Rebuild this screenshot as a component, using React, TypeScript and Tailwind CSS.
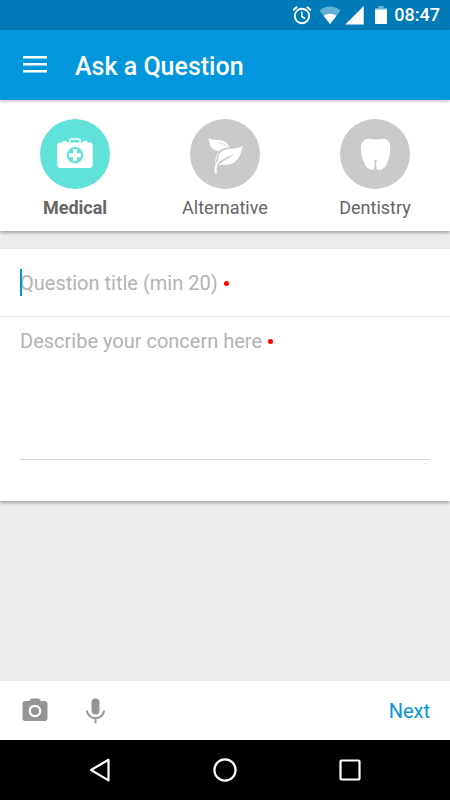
import { useState } from "react";
import type { ReactNode } from "react";

function StatusBar() {
  return (
    <div className="flex h-[30px] items-center justify-end bg-[#007bb8] pr-[10px] text-white">
      <svg className="mr-[6px] h-[22px] w-[22px]" viewBox="0 0 22 22" fill="none" stroke="currentColor" aria-hidden="true">
        <circle cx="11" cy="12" r="7.2" strokeWidth="1.9" />
        <path d="M10.8 7.5v5l3.3 2" strokeWidth="1.5" />
        <path d="M2.2 6.2l4-3.4M19.8 6.2l-4-3.4" strokeWidth="1.9" />
      </svg>
      <svg className="mr-[4px] h-[20px] w-[22px]" viewBox="0 0 22 20" fill="currentColor" aria-hidden="true">
        <path d="M.3 5.500Q11-2.500 21.7 5.500L11 19z" opacity=".4" />
        <path d="M4.500 10.800Q11 6.500 17.500 10.800L11 19z" />
      </svg>
      <svg className="mr-[11px] h-[20px] w-[19px]" viewBox="0 0 19 20" fill="currentColor" aria-hidden="true">
        <path d="M18.7 1v18.500H.3z" />
      </svg>
      <svg className="mr-[7px] h-[20px] w-[12px]" viewBox="0 0 12 20" fill="currentColor" aria-hidden="true">
        <path d="M3.3 1h5.4v2H12v3H0V3h3.3z" opacity=".4" />
        <path d="M0 4.6h12V18q0 1-1 1H1q-1 0-1-1z" />
      </svg>
      <span className="text-[18px] leading-[22px] font-medium">08:47</span>
    </div>
  );
}

function MedicalIcon() {
  return (
    <svg className="h-full w-full" viewBox="0 0 70 70" aria-hidden="true">
      <path d="M29.8 23.5v-1.3q0-2.2 2.2-2.2h6q2.2 0 2.2 2.2v1.3" fill="none" stroke="#fff" strokeWidth="1.600" />
      <path
        d="M20.3 23.4h2q.3-1.4 1.5-1.4h2q1.2 0 1.5 1.4h15.4q.3-1.4 1.5-1.4h2q1.2 0 1.5 1.4h2q3 0 3 3V46q0 3-3 3H20.3q-3 0-3-3V26.400q0-3 3-3z"
        fill="#fff"
      />
      <circle cx="35" cy="36.200" r="8.200" fill="#60e2d8" />
      <path d="M33 30.200h4v4h4v4h-4v4h-4v-4h-4v-4h4z" fill="#fff" />
    </svg>
  );
}

function LeafIcon() {
  return (
    <svg className="h-full w-full" viewBox="0 0 70 70" aria-hidden="true">
      <path
        d="M18 19.200C22 21.200 26.500 20.500 31 21.300C35.500 22.300 38 25 39.600 28.300C35.500 28.600 31.500 29.700 29.200 32C24.500 31.500 21.300 29.500 20.300 26.500C19.500 24 19.800 21.700 18 19.200Z"
        fill="#fff"
      />
      <path d="M29 23.400C32.500 24.200 35.200 25.700 37.500 28" fill="none" stroke="#cacaca" strokeWidth=".8" />
      <path
        d="M53.200 26.800C51.500 30 51.500 34 49.300 37.500C46.500 42.500 42.500 45.500 37 45.800C33.500 46 31 45.500 28 46.300C33 41.500 39 40 44.500 34.500C38 38.300 33 39 28.500 44C27.500 38.500 28.800 33.500 33.500 31.300C39.500 28.800 47.500 30.500 53.200 26.800Z"
        fill="#fff"
      />
      <path d="M26 54.300C25 49.500 25.600 46 28.300 42.500" fill="none" stroke="#fff" strokeWidth="2" />
      <path d="M28.200 34C26.500 37 25.600 40.500 25.600 43.500" fill="none" stroke="#fff" strokeWidth="1" />
    </svg>
  );
}

function ToothIcon() {
  return (
    <svg className="h-full w-full" viewBox="0 0 70 70" aria-hidden="true">
      <path
        d="M28 19.800C31.500 19.400 33 20.600 35.500 20.600S40 19.400 43.500 19.800C48.500 20.400 50.500 24.500 50.300 29.500C50.100 35.500 48.800 41.500 46.300 46C44.500 49.300 41.500 51 38.500 51.200C37 51.200 36.400 50.200 36.200 48.800L35.800 43.500H35L34.600 48.800C34.400 50.200 34 51.200 32.500 51.100C29.500 50.800 26.500 48.800 25 45.500C22.500 40.500 20.900 35.500 20.900 29.500C20.900 24.500 23 20.400 28 19.800Z"
        fill="#fff"
      />
      <circle cx="35.400" cy="42.500" r="1.400" fill="#cacaca" />
      <path d="M34.900 43h1l.5 8.500h-2z" fill="#cacaca" />
    </svg>
  );
}

const categories: { name: string; icon: ReactNode }[] = [
  { name: "Medical", icon: <MedicalIcon /> },
  { name: "Alternative", icon: <LeafIcon /> },
  { name: "Dentistry", icon: <ToothIcon /> },
];

function Required() {
  return <span className="mb-[3px] ml-[6px] inline-block h-[5px] w-[5px] rounded-full bg-[#ff0000] align-middle" />;
}

export default function App() {
  const [selected, setSelected] = useState("Medical");
  const [title, setTitle] = useState("");
  const [details, setDetails] = useState("");

  return (
    <div className="flex min-h-screen flex-col bg-[#ececec] font-[Roboto,sans-serif]">
      <StatusBar />
      <header className="relative flex h-[70px] items-center bg-[#0296dd] pl-[23px] text-white shadow-[0_1px_3px_rgba(0,0,0,0.3)]">
        <button type="button" aria-label="Menu" className="mr-[28px] h-6 w-6">
          <svg className="h-6 w-6" viewBox="0 0 24 24" fill="currentColor" aria-hidden="true">
            <path d="M0 3h24v2.500H0zM0 10h24v2.500H0zM0 17h24v2.500H0z" />
          </svg>
        </button>
        <h1 className="pt-[3px] text-[25px] leading-[30px] font-medium">Ask a Question</h1>
      </header>

      <nav aria-label="Category" className="grid h-[131px] grid-cols-3 bg-white shadow-[0_2px_3px_rgba(0,0,0,0.3)]">
        {categories.map(({ name, icon }) => {
          const active = name === selected;
          return (
            <button
              key={name}
              type="button"
              aria-pressed={active}
              onClick={() => setSelected(name)}
              className="flex flex-col items-center pt-[19px]"
            >
              <span className={active ? "h-[70px] w-[70px] rounded-full bg-[#60e2d8]" : "h-[70px] w-[70px] rounded-full bg-[#cacaca]"}>
                {icon}
              </span>
              <span
                className={
                  active
                    ? "mt-2 text-[18px] leading-[22px] font-bold text-[#666666]"
                    : "mt-2 text-[18px] leading-[22px] text-[#666666]"
                }
              >
                {name}
              </span>
            </button>
          );
        })}
      </nav>

      <form className="mt-[18px] bg-white pb-[41px] shadow-[0_2px_3px_rgba(0,0,0,0.3)]">
        <div className="relative h-[68px] border-b border-[#e6e6e6] px-5 pt-5">
          <input
            id="title"
            value={title}
            onChange={(e) => setTitle(e.target.value)}
            className="block h-[28px] w-full text-[20px] leading-[28px] text-[#444444] caret-[#0296dd] outline-none"
          />
          {title === "" && (
            <>
              <label htmlFor="title" className="absolute top-5 left-5 text-[20px] leading-[28px] text-[#b3b3b3]">
                Question title (min 20)
                <Required />
              </label>
              <span className="absolute top-5 left-5 h-[27px] w-[2px] bg-[#0296dd]" />
            </>
          )}
        </div>
        <div className="relative px-5 pt-[10px]">
          <textarea
            id="details"
            value={details}
            onChange={(e) => setDetails(e.target.value)}
            className="block h-[133px] w-full resize-none border-b border-[#d6d6d6] text-[20px] leading-[28px] text-[#444444] outline-none"
          />
          {details === "" && (
            <label htmlFor="details" className="absolute top-[10px] left-5 text-[20px] leading-[28px] text-[#b3b3b3]">
              Describe your concern here
              <Required />
            </label>
          )}
        </div>
      </form>

      <footer className="mt-auto">
        <div className="flex h-[59px] items-center bg-white px-[20px]">
          <button type="button" aria-label="Add photo" className="mr-[30px] h-[30px] w-[30px] text-[#959595]">
            <svg className="h-[30px] w-[30px]" viewBox="0 0 24 24" fill="currentColor" aria-hidden="true">
              <circle cx="12" cy="12" r="3.200" />
              <path d="M9 2L7.170 4H4c-1.100 0-2 .9-2 2v12c0 1.100.9 2 2 2h16c1.100 0 2-.9 2-2V6c0-1.100-.9-2-2-2h-3.170L15 2H9zm3 15c-2.760 0-5-2.240-5-5s2.240-5 5-5 5 2.240 5 5-2.240 5-5 5z" />
            </svg>
          </button>
          <button type="button" aria-label="Record voice" className="h-[30px] w-[30px] text-[#959595]">
            <svg className="h-[30px] w-[30px]" viewBox="0 0 30 30" fill="none" stroke="currentColor" strokeWidth="2" aria-hidden="true">
              <rect x="11.500" y="2.500" width="8" height="16" rx="4" fill="currentColor" stroke="none" />
              <path d="M7 14.500C7 19 11 22.200 15.500 22.200S24 19 24 14.500M15.500 22v5.300" />
            </svg>
          </button>
          <button type="button" className="ml-auto text-[20px] leading-[28px] text-[#0296dd]">
            Next
          </button>
        </div>
        <div className="flex h-[60px] items-center justify-center gap-[95px] bg-black text-white">
          <button type="button" aria-label="Back" className="h-[30px] w-[30px]">
            <svg className="h-[30px] w-[30px]" viewBox="0 0 30 30" fill="none" stroke="currentColor" strokeWidth="2.200" strokeLinejoin="round" aria-hidden="true">
              <path d="M23.500 4.800v20.600L6 15z" />
            </svg>
          </button>
          <button type="button" aria-label="Home" className="h-[30px] w-[30px]">
            <svg className="h-[30px] w-[30px]" viewBox="0 0 30 30" fill="none" stroke="currentColor" strokeWidth="2.200" aria-hidden="true">
              <circle cx="15" cy="15" r="10.600" />
            </svg>
          </button>
          <button type="button" aria-label="Recent apps" className="h-[30px] w-[30px]">
            <svg className="h-[30px] w-[30px]" viewBox="0 0 30 30" fill="none" stroke="currentColor" strokeWidth="2.200" aria-hidden="true">
              <rect x="5.500" y="5.500" width="19" height="19" rx="1" />
            </svg>
          </button>
        </div>
      </footer>
    </div>
  );
}
